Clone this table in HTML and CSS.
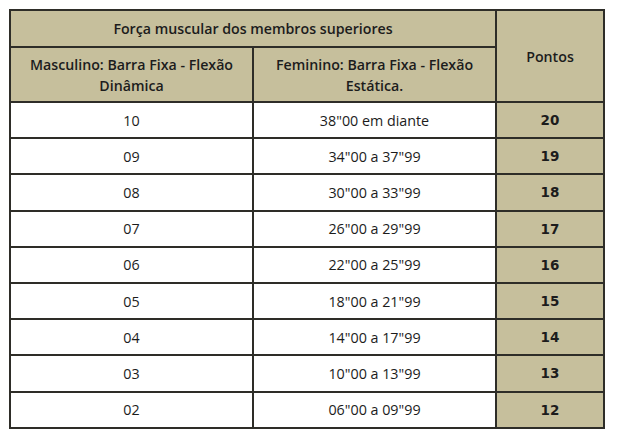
FILE: index.html
```html
<!DOCTYPE html>
<html lang="pt">
<head>
<meta charset="utf-8">
<link rel="stylesheet" href="styles.css">
</head>
<body>
<table class="tabela">
  <colgroup>
    <col class="c1"><col class="c2"><col class="c3">
  </colgroup>
  <thead>
    <tr class="h1">
      <th colspan="2">Força muscular dos membros superiores</th>
      <th rowspan="2">Pontos</th>
    </tr>
    <tr class="h2">
      <th>Masculino: Barra Fixa - Flexão Dinâmica</th>
      <th>Feminino: Barra Fixa - Flexão Estática.</th>
    </tr>
  </thead>
  <tbody>
    <tr><td>10</td><td>38"00 em diante</td><td class="pts">20</td></tr>
    <tr><td>09</td><td>34"00 a 37"99</td><td class="pts">19</td></tr>
    <tr><td>08</td><td>30"00 a 33"99</td><td class="pts">18</td></tr>
    <tr><td>07</td><td>26"00 a 29"99</td><td class="pts">17</td></tr>
    <tr><td>06</td><td>22"00 a 25"99</td><td class="pts">16</td></tr>
    <tr><td>05</td><td>18"00 a 21"99</td><td class="pts">15</td></tr>
    <tr><td>04</td><td>14"00 a 17"99</td><td class="pts">14</td></tr>
    <tr><td>03</td><td>10"00 a 13"99</td><td class="pts">13</td></tr>
    <tr><td>02</td><td>06"00 a 09"99</td><td class="pts">12</td></tr>
  </tbody>
</table>
</body>
</html>
```
FILE: styles.css
```css
html, body {
  margin: 0;
  background: #ffffff;
}
body {
  padding: 9px 0 0 9px;
  font-family: "Open Sans", "Liberation Sans", sans-serif;
  color: #1c1c1c;
}
.tabela {
  border-collapse: collapse;
  table-layout: fixed;
  width: 596px;
  border: 2px solid #2e2d28;
}
.c1 { width: 243px; }
.c2 { width: 243px; }
.c3 { width: 108px; }
.tabela th,
.tabela td {
  border: 2px solid #2e2d28;
  text-align: center;
  padding: 0 12px;
}
.tabela th {
  background: #c6bf9c;
  font-weight: 600;
  font-size: 14.2px;
  line-height: 21px;
}
.h1 th { height: 35px; }
.h2 th { height: 53px; }
.tabela td {
  font-size: 14.3px;
  font-weight: 400;
  height: 34.2px;
}
.tabela td.pts {
  background: #c6bf9c;
  font-family: "DejaVu Sans", Verdana, sans-serif;
  font-weight: 700;
  font-size: 13.5px;
}
```
